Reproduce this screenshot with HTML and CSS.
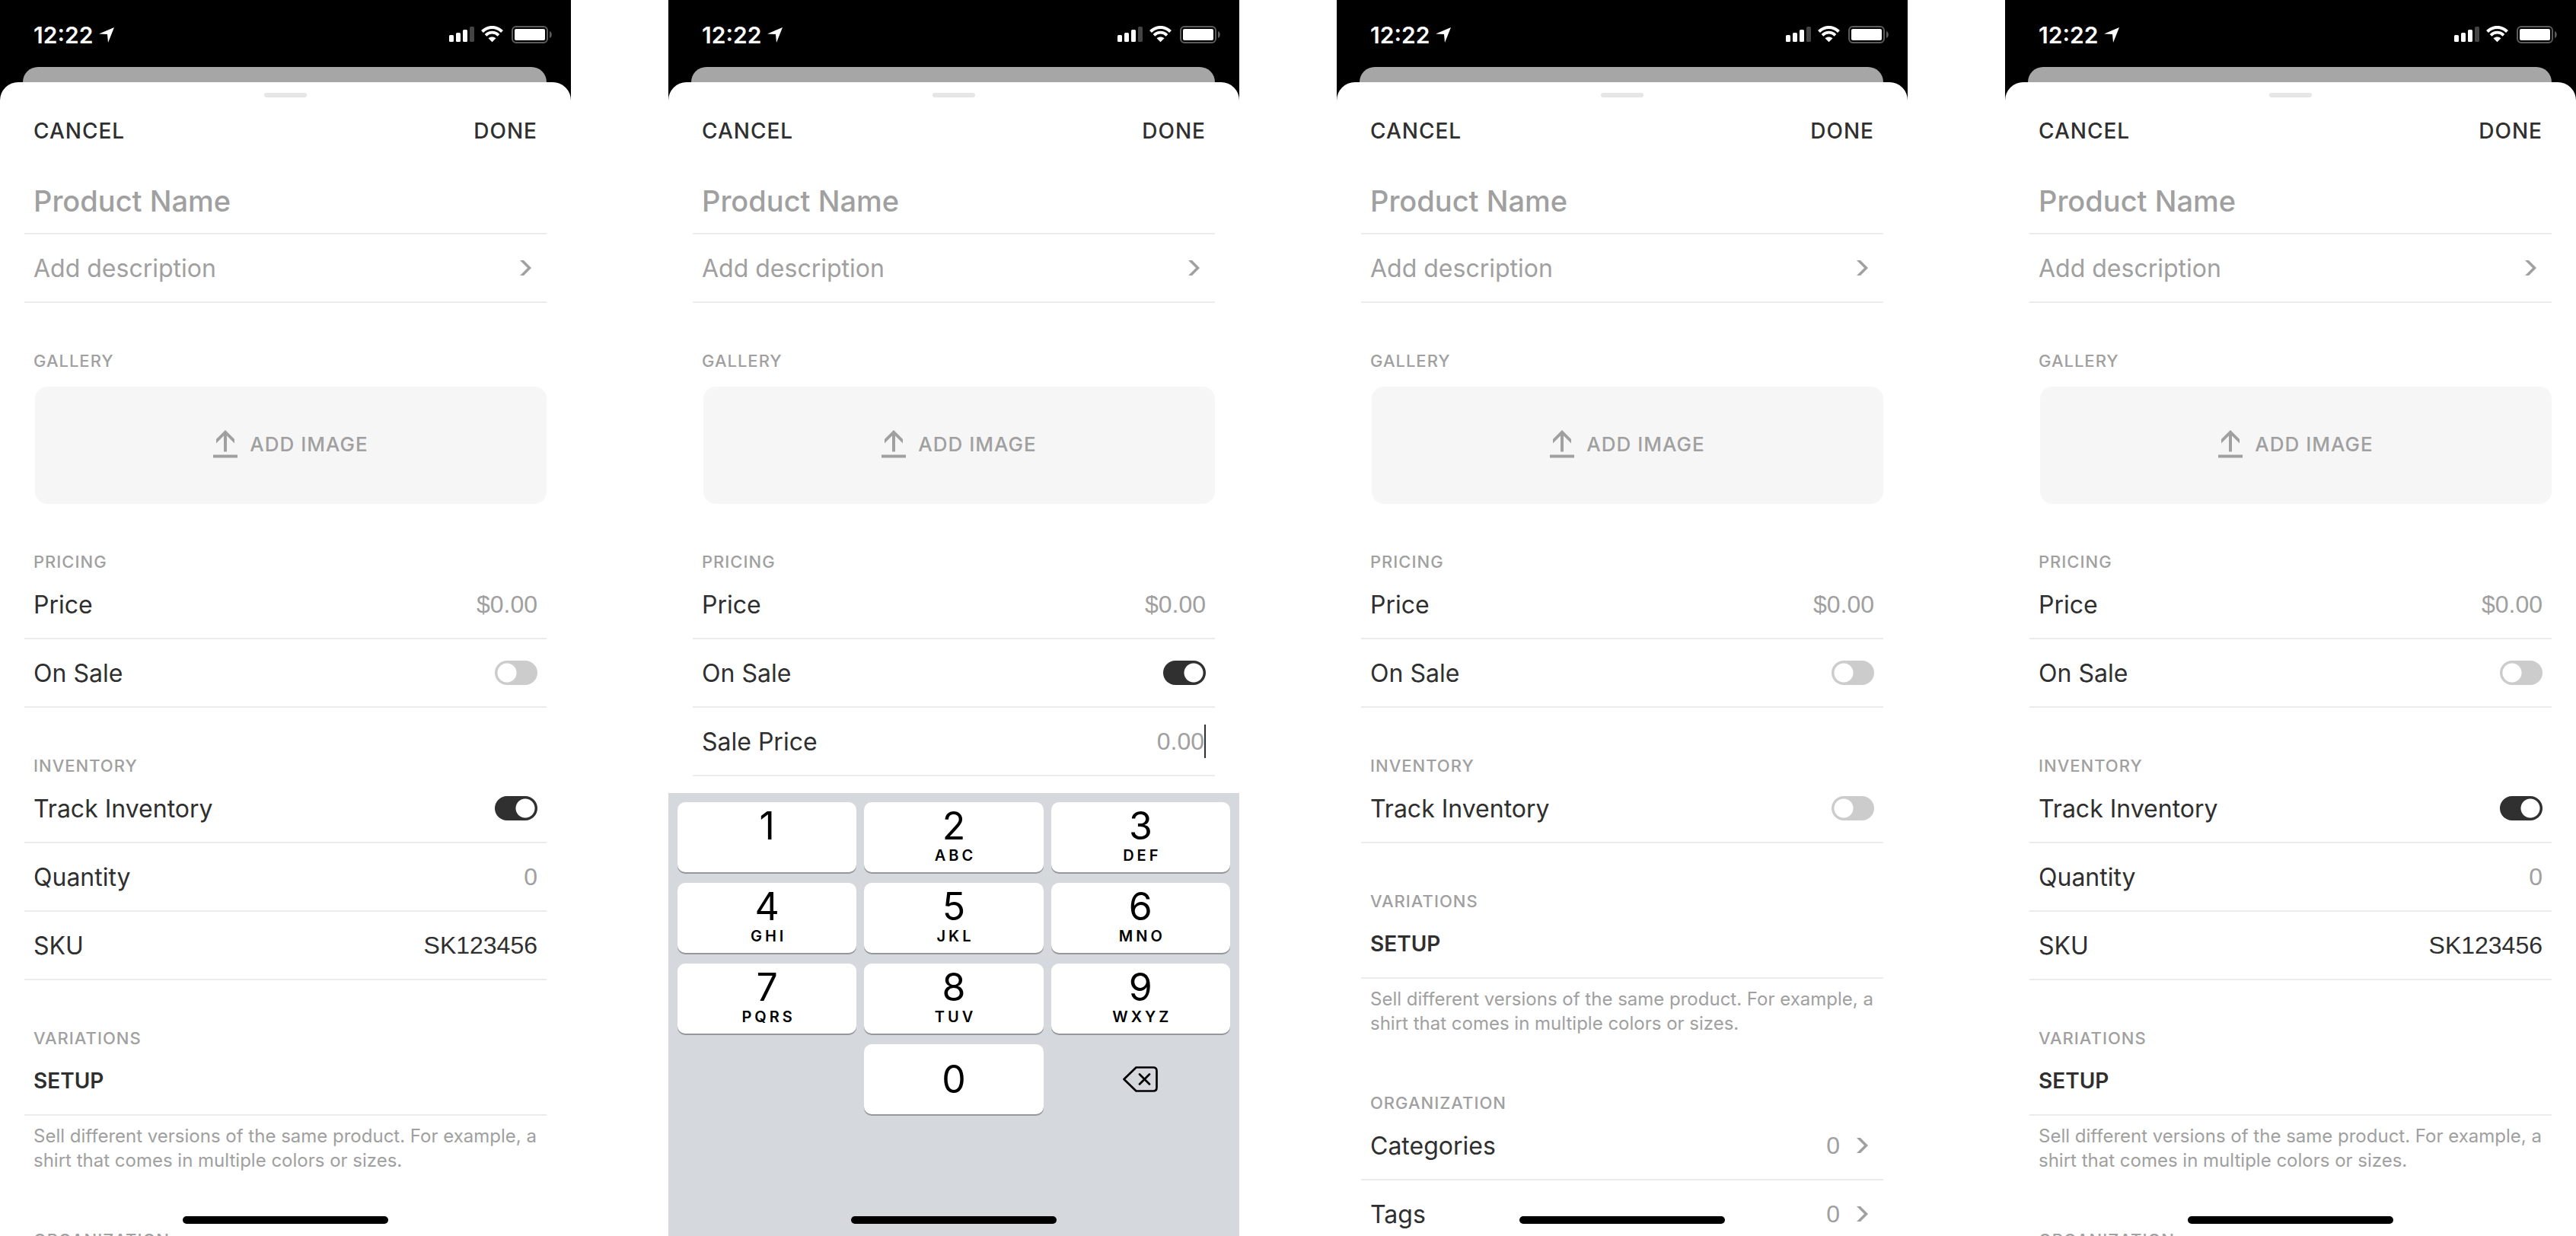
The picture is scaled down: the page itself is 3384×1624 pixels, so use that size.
FILE: index.html
```html
<!DOCTYPE html>
<html lang="en">
<head>
<meta charset="utf-8">
<meta name="viewport" content="width=device-width, initial-scale=1">
<title>Add Product</title>
<link rel="stylesheet" href="styles.css">
</head>
<body>
<svg class="sprite" aria-hidden="true">
  <symbol id="location" viewBox="0 0 20 20"><path d="M20 0 L12 20 L11 9 L0 8.500 Z"/></symbol>
  <symbol id="signals" viewBox="0 0 136 24">
    <rect x="0" y="12" width="6" height="9" rx="1.500"/>
    <rect x="9" y="9" width="6" height="12" rx="1.500"/>
    <rect x="18" y="5" width="6" height="16" rx="1.500"/>
    <rect x="27" y="1" width="6" height="20" rx="1.500" fill="#444"/>
    <path d="M43.500 7.500 C51 0 62 0 69.500 7.500" fill="none" stroke="#fff" stroke-width="4"/>
    <path d="M48 12.300 C53 7.500 60 7.500 65 12.300" fill="none" stroke="#fff" stroke-width="3.800"/>
    <path d="M51.500 16.300 C54.500 13.800 58.500 13.800 61.500 16.300 L56.500 21.300 Z"/>
    <rect x="83" y="1" width="46" height="21" rx="5" fill="none" stroke="#5c5c5c" stroke-width="2"/>
    <rect x="86" y="4" width="40" height="15" rx="2"/>
    <path d="M132 7 C135.700 8.500 135.700 14.500 132 16 Z" fill="#5c5c5c"/>
  </symbol>
  <symbol id="chevron" viewBox="0 0 15 20"><path d="M0 0 H5 L15 10 L5 20 H0 L10 10 Z"/></symbol>
  <symbol id="upload" viewBox="0 0 32 37"><path d="M16 0 L28 12 V17.500 L18 7.500 V28.500 H14 V7.500 L4 17.500 V12 Z M0 32.500 H32 V36.500 H0 Z"/></symbol>
  <symbol id="backspace" viewBox="0 0 46 34"><path d="M17.500 1.500 H40 Q44.500 1.500 44.500 6 V28 Q44.500 32.500 40 32.500 H17.500 L1.500 17 Z M22 10.500 L35 23.500 M35 10.500 L22 23.500" fill="none" stroke="#000" stroke-width="2.700" stroke-linejoin="round" stroke-linecap="round"/></symbol>
</svg>

<main class="screens">
  <section class="phone">
    <header class="status"><span class="time">12:22</span><svg class="location"><use href="#location"/></svg><svg class="signals"><use href="#signals"/></svg></header>
    <div class="backcard"></div>
    <form class="sheet">
      <div class="grabber"></div>
      <div class="toolbar"><button type="button">CANCEL</button><button type="button">DONE</button></div>
      <div class="row row-name"><input class="name" placeholder="Product Name" aria-label="Product Name"></div>
      <button type="button" class="row row-link muted"><span class="grow">Add description</span><svg class="chevron"><use href="#chevron"/></svg></button>
      <h2>GALLERY</h2>
      <button type="button" class="upload"><svg class="upload-icon"><use href="#upload"/></svg>ADD IMAGE</button>
      <h2>PRICING</h2>
      <div class="row"><label for="price1">Price</label><input id="price1" class="value" placeholder="$0.00"></div>
      <div class="row"><label for="sale1">On Sale</label><input id="sale1" class="toggle" type="checkbox"></div>
      <h2>INVENTORY</h2>
      <div class="row"><label for="track1">Track Inventory</label><input id="track1" class="toggle" type="checkbox" checked></div>
      <div class="row"><label for="qty1">Quantity</label><input id="qty1" class="value" placeholder="0"></div>
      <div class="row"><label for="sku1">SKU</label><input id="sku1" class="value" value="SK123456"></div>
      <h2>VARIATIONS</h2>
      <button type="button" class="row setup">SETUP</button>
      <p class="hint">Sell different versions of the same product. For example, a shirt that comes in multiple colors or sizes.</p>
      <h2>ORGANIZATION</h2>
    </form>
    <div class="home"></div>
  </section>

  <section class="phone">
    <header class="status"><span class="time">12:22</span><svg class="location"><use href="#location"/></svg><svg class="signals"><use href="#signals"/></svg></header>
    <div class="backcard"></div>
    <form class="sheet sheet-short">
      <div class="grabber"></div>
      <div class="toolbar"><button type="button">CANCEL</button><button type="button">DONE</button></div>
      <div class="row row-name"><input class="name" placeholder="Product Name" aria-label="Product Name"></div>
      <button type="button" class="row row-link muted"><span class="grow">Add description</span><svg class="chevron"><use href="#chevron"/></svg></button>
      <h2>GALLERY</h2>
      <button type="button" class="upload"><svg class="upload-icon"><use href="#upload"/></svg>ADD IMAGE</button>
      <h2>PRICING</h2>
      <div class="row"><label for="price2">Price</label><input id="price2" class="value" placeholder="$0.00"></div>
      <div class="row"><label for="sale2">On Sale</label><input id="sale2" class="toggle" type="checkbox" checked></div>
      <div class="row"><label for="saleprice2">Sale Price</label><input id="saleprice2" class="value" placeholder="0.00"><span class="caret"></span></div>
    </form>
    <div class="keypad">
      <button type="button" class="key">1</button>
      <button type="button" class="key">2<span class="letters">ABC</span></button>
      <button type="button" class="key">3<span class="letters">DEF</span></button>
      <button type="button" class="key">4<span class="letters">GHI</span></button>
      <button type="button" class="key">5<span class="letters">JKL</span></button>
      <button type="button" class="key">6<span class="letters">MNO</span></button>
      <button type="button" class="key">7<span class="letters">PQRS</span></button>
      <button type="button" class="key">8<span class="letters">TUV</span></button>
      <button type="button" class="key">9<span class="letters">WXYZ</span></button>
      <button type="button" class="key key-zero">0</button>
      <button type="button" class="key key-delete" aria-label="Delete"><svg class="backspace"><use href="#backspace"/></svg></button>
    </div>
    <div class="home"></div>
  </section>

  <section class="phone">
    <header class="status"><span class="time">12:22</span><svg class="location"><use href="#location"/></svg><svg class="signals"><use href="#signals"/></svg></header>
    <div class="backcard"></div>
    <form class="sheet">
      <div class="grabber"></div>
      <div class="toolbar"><button type="button">CANCEL</button><button type="button">DONE</button></div>
      <div class="row row-name"><input class="name" placeholder="Product Name" aria-label="Product Name"></div>
      <button type="button" class="row row-link muted"><span class="grow">Add description</span><svg class="chevron"><use href="#chevron"/></svg></button>
      <h2>GALLERY</h2>
      <button type="button" class="upload"><svg class="upload-icon"><use href="#upload"/></svg>ADD IMAGE</button>
      <h2>PRICING</h2>
      <div class="row"><label for="price3">Price</label><input id="price3" class="value" placeholder="$0.00"></div>
      <div class="row"><label for="sale3">On Sale</label><input id="sale3" class="toggle" type="checkbox"></div>
      <h2>INVENTORY</h2>
      <div class="row"><label for="track3">Track Inventory</label><input id="track3" class="toggle" type="checkbox"></div>
      <h2>VARIATIONS</h2>
      <button type="button" class="row setup">SETUP</button>
      <p class="hint">Sell different versions of the same product. For example, a shirt that comes in multiple colors or sizes.</p>
      <h2>ORGANIZATION</h2>
      <button type="button" class="row row-link"><span class="grow">Categories</span><span class="count">0</span><svg class="chevron"><use href="#chevron"/></svg></button>
      <button type="button" class="row row-link"><span class="grow">Tags</span><span class="count">0</span><svg class="chevron"><use href="#chevron"/></svg></button>
    </form>
    <div class="home"></div>
  </section>

  <section class="phone">
    <header class="status"><span class="time">12:22</span><svg class="location"><use href="#location"/></svg><svg class="signals"><use href="#signals"/></svg></header>
    <div class="backcard"></div>
    <form class="sheet">
      <div class="grabber"></div>
      <div class="toolbar"><button type="button">CANCEL</button><button type="button">DONE</button></div>
      <div class="row row-name"><input class="name" placeholder="Product Name" aria-label="Product Name"></div>
      <button type="button" class="row row-link muted"><span class="grow">Add description</span><svg class="chevron"><use href="#chevron"/></svg></button>
      <h2>GALLERY</h2>
      <button type="button" class="upload"><svg class="upload-icon"><use href="#upload"/></svg>ADD IMAGE</button>
      <h2>PRICING</h2>
      <div class="row"><label for="price4">Price</label><input id="price4" class="value" placeholder="$0.00"></div>
      <div class="row"><label for="sale4">On Sale</label><input id="sale4" class="toggle" type="checkbox"></div>
      <h2>INVENTORY</h2>
      <div class="row"><label for="track4">Track Inventory</label><input id="track4" class="toggle" type="checkbox" checked></div>
      <div class="row"><label for="qty4">Quantity</label><input id="qty4" class="value" placeholder="0"></div>
      <div class="row"><label for="sku4">SKU</label><input id="sku4" class="value" value="SK123456"></div>
      <h2>VARIATIONS</h2>
      <button type="button" class="row setup">SETUP</button>
      <p class="hint">Sell different versions of the same product. For example, a shirt that comes in multiple colors or sizes.</p>
      <h2>ORGANIZATION</h2>
    </form>
    <div class="home"></div>
  </section>
</main>
</body>
</html>
```

FILE: styles.css
```css
* { box-sizing: border-box; }

body {
  margin: 0;
  background: #fff;
  color: #2f2f2f;
  font-family: Inter, "Liberation Sans", sans-serif;
  font-size: 32px;
}

button, input {
  margin: 0;
  padding: 0;
  border: 0;
  outline: 0;
  background: none;
  color: inherit;
  font: inherit;
}

svg { flex: none; fill: currentColor; }
.sprite { display: none; }

.screens {
  display: grid;
  grid-template-columns: repeat(4, minmax(0, 1fr));
  gap: 128px;
}

.phone {
  position: relative;
  display: flex;
  flex-direction: column;
  height: 100vh;
  overflow: hidden;
  background: linear-gradient(#000 160px, #fff 160px);
}

/* Status bar */
.status {
  display: flex;
  flex: none;
  align-items: center;
  height: 88px;
  padding: 4px 24px 0 44px;
  color: #fff;
}
.time { font-size: 30px; font-weight: 600; line-height: 36px; }
.location { width: 20px; height: 20px; margin-left: 8px; }
.signals { width: 136px; height: 24px; margin-left: auto; }

.backcard {
  flex: none;
  height: 20px;
  margin: 0 32px 0 30px;
  border-radius: 20px 20px 0 0;
  background: #a6a6a6;
}

/* Sheet */
.sheet {
  flex: 1 0 auto;
  padding: 14px 32px 0;
  border-radius: 24px 24px 0 0;
  background: #fff;
}
.sheet-short { flex: none; padding-bottom: 22px; }

.grabber {
  width: 56px;
  height: 6px;
  margin: 0 auto;
  border-radius: 3px;
  background: #e6e6e6;
}

.toolbar {
  display: flex;
  align-items: center;
  justify-content: space-between;
  height: 94px;
  padding: 0 12px 6px;
}
.toolbar button { font-size: 28px; font-weight: 500; letter-spacing: 1px; }

.row {
  display: flex;
  align-items: center;
  width: 100%;
  height: 90px;
  padding: 0 12px;
  border-bottom: 2px solid #ebebeb;
  text-align: left;
}
.row-name { height: 86px; }
.row-link { padding-right: 20px; }
.muted, .count, .chevron { color: #a0a0a0; }
.grow { flex: 1; }

input::placeholder { color: #a0a0a0; opacity: 1; }
.name { width: 100%; font-size: 38px; font-weight: 500; }
.value {
  flex: 1;
  min-width: 0;
  font-family: "Liberation Sans", sans-serif;
  text-align: right;
}
.caret { width: 2px; height: 44px; background: #2f2f2f; }
.count { margin-right: 22px; font-family: "Liberation Sans", sans-serif; }
.chevron { width: 15px; height: 20px; }

.toggle {
  appearance: none;
  width: 56px;
  height: 32px;
  margin-left: auto;
  border-radius: 16px;
  background: radial-gradient(circle at 16px 16px, #fff 12px, #ccc 13px);
}
.toggle:checked { background: radial-gradient(circle at 40px 16px, #fff 12px, #303030 13px); }

h2 {
  margin: 64px 0 0 12px;
  color: #a0a0a0;
  font-size: 22px;
  font-weight: 500;
  line-height: 24px;
  letter-spacing: 1px;
}

.upload {
  display: flex;
  align-items: center;
  justify-content: center;
  gap: 16px;
  width: calc(100% - 14px);
  height: 154px;
  margin: 22px 0 0 14px;
  padding-bottom: 4px;
  border-radius: 16px;
  background: #f6f6f6;
  color: #a0a0a0;
  font-size: 26px;
  font-weight: 500;
  letter-spacing: 1px;
}
.upload-icon { width: 32px; height: 37px; }

.setup { font-size: 28px; font-weight: 600; }

.hint {
  margin: 0;
  padding: 11px 0 12px 12px;
  color: #a0a0a0;
  font-size: 24px;
  font-variation-settings: "opsz" 32;
  line-height: 32px;
}

/* Number pad */
.keypad {
  display: grid;
  flex: 1;
  grid-template-columns: repeat(3, 1fr);
  grid-auto-rows: 92px;
  align-content: start;
  gap: 14px 10px;
  padding: 12px;
  background: #d5d8dd;
  color: #000;
}
.key {
  display: flex;
  flex-direction: column;
  align-items: center;
  justify-content: flex-start;
  gap: 2px;
  padding-top: 6px;
  border-radius: 10px;
  background: #fff;
  box-shadow: 0 2px 0 #94979b;
  font-size: 50px;
  line-height: 50px;
}
.letters {
  padding-left: 4px;
  font-size: 20px;
  font-weight: 600;
  line-height: 24px;
  letter-spacing: 4px;
}
.key-zero, .key-delete { justify-content: center; padding-top: 0; }
.key-zero { grid-column: 2; }
.key-delete { background: none; box-shadow: none; }
.backspace { width: 46px; height: 34px; }

/* Home indicator floats above the content */
.home {
  position: absolute;
  bottom: 16px;
  left: 50%;
  width: 270px;
  height: 10px;
  border-radius: 5px;
  background: #000;
  transform: translateX(-50%);
}
```
